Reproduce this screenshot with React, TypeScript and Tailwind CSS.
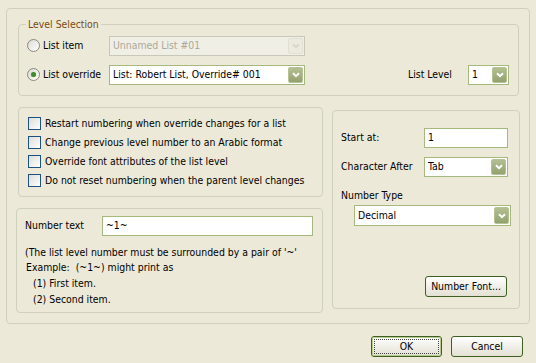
import React from "react";

const FONT = { fontFamily: '"DejaVu Sans Condensed", "DejaVu Sans", sans-serif' };

function Chevron({ disabled }: { disabled?: boolean }) {
  return (
    <svg width="8" height="6" viewBox="0 0 8 6">
      <path d="M1 1.2 L4 4.2 L7 1.2" fill="none" stroke={disabled ? "#D8D6CB" : "#ffffff"} strokeWidth="2" />
    </svg>
  );
}

function Combo({ value, className, disabled }: { value: string; className: string; disabled?: boolean }) {
  return (
    <div
      className={
        "flex items-stretch border " +
        (disabled ? "border-[#C9C7BA] bg-[#F0EFE6] text-[#ACA899] " : "border-[#A5B97F] bg-white text-black ") +
        className
      }
    >
      <div className="flex-1 flex items-center pl-[3px] whitespace-nowrap overflow-hidden">{value}</div>
      <div
        className={
          "m-[1px] w-[15px] rounded-[2px] flex items-center justify-center border " +
          (disabled
            ? "border-[#E2E0D6] bg-[#ECEADF]"
            : "border-[#B6C294] bg-gradient-to-b from-[#B3BF92] to-[#93A16F]")
        }
      >
        <Chevron disabled={disabled} />
      </div>
    </div>
  );
}

function TextBox({ value, className }: { value: string; className: string }) {
  return (
    <div className={"flex items-center border border-[#A5B97F] bg-white pl-[3px] " + className}>{value}</div>
  );
}

function Radio({ checked }: { checked?: boolean }) {
  return (
    <div className="w-[13px] h-[13px] rounded-full border border-[#8A8A7F] bg-gradient-to-br from-[#DCDBD3] to-white flex items-center justify-center">
      {checked && <div className="w-[5px] h-[5px] rounded-full bg-[#3E8B2E] shadow-[0_0_1px_#8FCB7A]" />}
    </div>
  );
}

function Check() {
  return <div className="w-[13px] h-[13px] border border-[#1C5180] bg-gradient-to-br from-[#DCDCD7] to-white" />;
}

function Button({ label, primary, className }: { label: string; primary?: boolean; className: string }) {
  return (
    <div
      className={
        "flex items-center justify-center rounded-[3px] border border-[#3D5F22] bg-gradient-to-b from-white to-[#E3E0D3] " +
        className
      }
    >
      {primary ? (
        <div className="w-full h-full rounded-[2px] border border-[#B6CB8D] p-[1px]">
          <div className="w-full h-full border border-dotted border-[#444] flex items-center justify-center">
            {label}
          </div>
        </div>
      ) : (
        label
      )}
    </div>
  );
}

export default function App() {
  const checks = [
    "Restart numbering when override changes for a list",
    "Change previous level number to an Arabic format",
    "Override font attributes of the list level",
    "Do not reset numbering when the parent level changes",
  ];

  return (
    <div className="w-[536px] h-[363px] bg-[#ECE9D8] text-black text-[10.4px] pt-[8px] pl-[6px] overflow-hidden" style={FONT}>
      {/* Outer frame */}
      <div className="w-[524px] h-[316px] border border-[#D0D0BF] rounded-[4px] pt-[15px] pl-[11px]">
        {/* Level Selection */}
        <div className="relative w-[501px] h-[72px] border border-[#D0D0BF] rounded-[4px] pt-[11px] pl-[8px]">
          <span className="absolute left-[7px] top-[-8px] px-[2px] bg-[#ECE9D8] text-[#7B4A12]">Level Selection</span>
          <div className="flex items-center h-[20px]">
            <div className="w-[82px] flex items-center gap-[3px]">
              <Radio />
              <span>List item</span>
            </div>
            <Combo value="Unnamed List #01" disabled className="w-[196px] h-[20px]" />
          </div>
          <div className="flex items-center h-[20px] mt-[9px]">
            <div className="w-[82px] flex items-center gap-[3px]">
              <Radio checked />
              <span>List override</span>
            </div>
            <Combo value="List: Robert List, Override# 001" className="w-[196px] h-[20px]" />
            <span className="ml-[103px] w-[60px]">List Level</span>
            <Combo value="1" className="w-[41px] h-[20px]" />
          </div>
        </div>

        <div className="flex mt-[11px]">
          {/* Left column */}
          <div className="flex flex-col">
            <div className="w-[305px] h-[90px] border border-[#D0D0BF] rounded-[4px] pt-[9px] pl-[9px]">
              {checks.map((c) => (
                <div key={c} className="flex items-center gap-[4px] h-[13px] mb-[6px]">
                  <Check />
                  <span className="whitespace-nowrap">{c}</span>
                </div>
              ))}
            </div>
            <div className="-ml-[2px] mt-[11px] w-[307px] h-[105px] border border-[#D0D0BF] rounded-[4px] pt-[7px] pl-[8px]">
              <div className="flex items-center h-[20px]">
                <span className="w-[77px]">Number text</span>
                <TextBox value="~1~" className="w-[211px] h-[20px]" />
              </div>
              <div className="mt-[9px] leading-[15px]">(The list level number must be surrounded by a pair of '~'</div>
              <div className="leading-[14px] pl-[1px]">Example:&nbsp; (~1~) might print as</div>
              <div className="mt-[1px] leading-[16px] pl-[8px]">(1) First item.</div>
              <div className="leading-[16px] pl-[8px]">(2) Second item.</div>
            </div>
          </div>

          {/* Right column */}
          <div className="ml-[9px] mt-[3px] w-[188px] h-[199px] border border-[#D0D0BF] rounded-[4px] pt-[17px] pl-[8px] flex flex-col">
            <div className="flex items-center h-[20px]">
              <span className="w-[83px]">Start at:</span>
              <TextBox value="1" className="w-[84px] h-[20px]" />
            </div>
            <div className="flex items-center h-[20px] mt-[9px]">
              <span className="w-[83px]">Character After</span>
              <Combo value="Tab" className="w-[84px] h-[20px]" />
            </div>
            <div className="mt-[11px] leading-[14px]">Number Type</div>
            <Combo value="Decimal" className="ml-[13px] mt-[3px] w-[157px] h-[21px]" />
            <Button label="Number Font..." className="ml-[84px] mt-[50px] w-[82px] h-[21px]" />
          </div>
        </div>
      </div>

      {/* Dialog buttons */}
      <div className="flex justify-end gap-[9px] pr-[13px] mt-[12px]">
        <Button label="OK" primary className="w-[71px] h-[21px]" />
        <Button label="Cancel" className="w-[72px] h-[21px]" />
      </div>
    </div>
  );
}
